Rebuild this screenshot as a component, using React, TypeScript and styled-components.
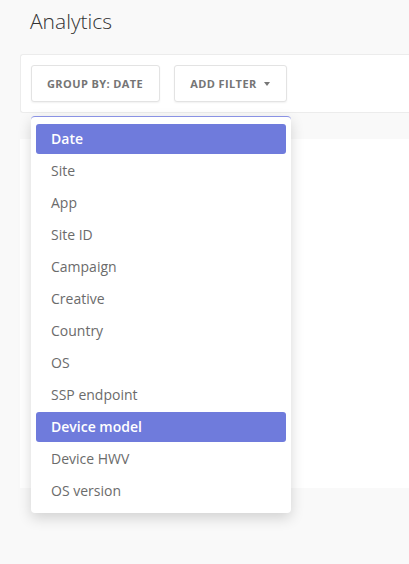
import styled, { createGlobalStyle } from "styled-components";

const GlobalStyle = createGlobalStyle`
  html, body {
    margin: 0;
    padding: 0;
    background: #f9f9f9;
    font-family: "Open Sans", "Liberation Sans", sans-serif;
  }
  * {
    box-sizing: border-box;
  }
`;

const Page = styled.div`
  width: 409px;
  height: 564px;
  overflow: hidden;
  padding-left: 20px;
  position: relative;
`;

const Title = styled.h1`
  margin: 0;
  padding: 5px 0 0 10px;
  height: 54px;
  font-size: 21px;
  font-weight: 300;
  color: #333;
  line-height: 32px;
`;

const Toolbar = styled.div`
  display: flex;
  align-items: center;
  gap: 14px;
  width: 420px;
  height: 59px;
  padding: 0 10px;
  background: #fff;
  border: 1px solid #ececec;
  border-right: none;
  border-radius: 3px 0 0 3px;
`;

const Button = styled.button`
  display: flex;
  align-items: center;
  height: 37px;
  padding: 0 16px 0 15px;
  background: #fff;
  border: 1px solid #e3e3e3;
  border-radius: 3px;
  box-shadow: 0 1px 2px rgba(0, 0, 0, 0.06);
  font-family: "Open Sans", "Liberation Sans", sans-serif;
  font-size: 11px;
  font-weight: 700;
  letter-spacing: 0.4px;
  color: #757575;
  text-transform: uppercase;
  cursor: pointer;
`;

const Caret = styled.span`
  width: 0;
  height: 0;
  border-left: 3px solid transparent;
  border-right: 3px solid transparent;
  border-top: 4px solid #777;
  margin-left: 7px;
`;

const Panel = styled.div`
  margin-top: 26px;
  width: 420px;
  height: 349px;
  background: #fff;
`;

const Menu = styled.ul`
  position: absolute;
  top: 116px;
  left: 31px;
  width: 260px;
  margin: 0;
  padding: 7px 5px 7px;
  list-style: none;
  display: flex;
  flex-direction: column;
  gap: 2px;
  background: #fff;
  border-top: 1px solid #8a92e4;
  border-radius: 4px;
  box-shadow: 0 5px 14px rgba(0, 0, 0, 0.16);
  z-index: 2;
`;

const Item = styled.li<{ $active?: boolean }>`
  height: 30px;
  display: flex;
  align-items: center;
  padding-left: 15px;
  border-radius: 3px;
  font-size: 14px;
  line-height: 1;
  font-weight: ${(p) => (p.$active ? 600 : 400)};
  color: ${(p) => (p.$active ? "#fff" : "#6b6b6b")};
  background: ${(p) => (p.$active ? "#6f7bdc" : "transparent")};
`;

const options = [
  "Date",
  "Site",
  "App",
  "Site ID",
  "Campaign",
  "Creative",
  "Country",
  "OS",
  "SSP endpoint",
  "Device model",
  "Device HWV",
  "OS version",
];

const selected = ["Date", "Device model"];

function App() {
  return (
    <>
      <GlobalStyle />
      <Page>
        <Title>Analytics</Title>
        <Toolbar>
          <Button>Group by: Date</Button>
          <Button>
            Add filter
            <Caret />
          </Button>
        </Toolbar>
        <Panel />
        <Menu>
          {options.map((o) => (
            <Item key={o} $active={selected.includes(o)}>
              {o}
            </Item>
          ))}
        </Menu>
      </Page>
    </>
  );
}

export default App;
